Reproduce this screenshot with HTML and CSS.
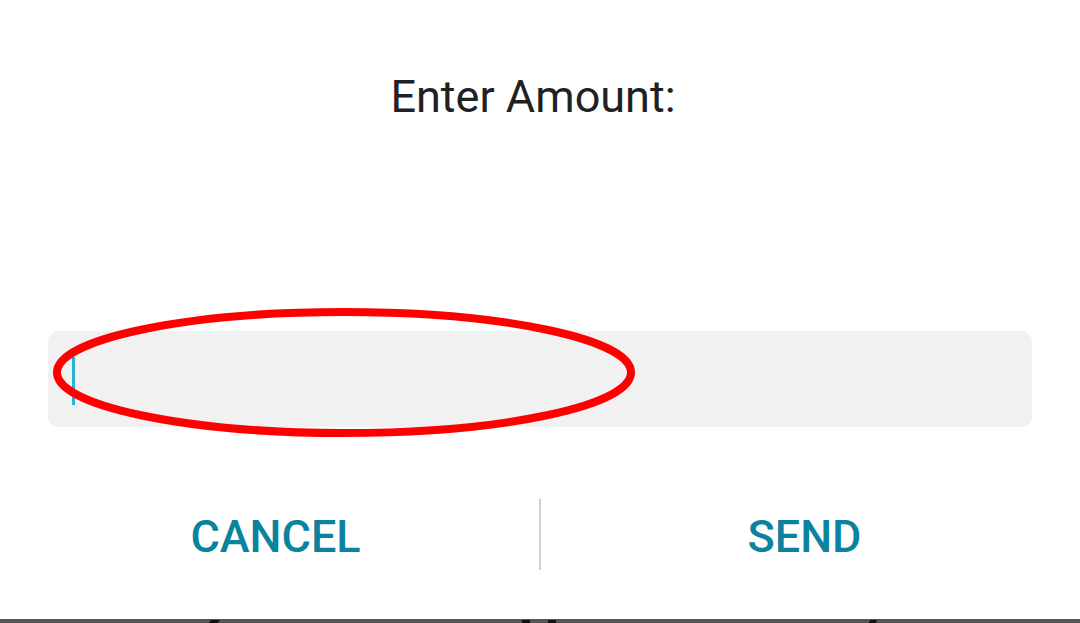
FILE: index.html
```html
<!DOCTYPE html>
<html lang="en">
<head>
<meta charset="utf-8">
<title>Enter Amount</title>
<link rel="stylesheet" href="styles.css">
</head>
<body>
<div class="screen">
  <div class="dialog">
    <div class="title">Enter Amount:</div>
    <div class="field">
      <span class="cursor"></span>
      <svg class="mark" width="984" height="96" viewBox="0 0 984 96">
        <ellipse cx="296" cy="41.5" rx="287" ry="60.5" fill="none" stroke="#ff0000" stroke-width="8"/>
      </svg>
    </div>
    <div class="actions">
      <button class="btn">CANCEL</button>
      <span class="divider"></span>
      <button class="btn">SEND</button>
    </div>
  </div>
  <div class="below">
    <svg width="1080" height="4" viewBox="0 0 1080 4">
      <polygon points="211,0 220,0 217,4 208,4" fill="#111"/>
      <rect x="522" y="0" width="8" height="4" fill="#111"/>
      <rect x="548" y="0" width="8" height="4" fill="#111"/>
      <polygon points="870,0 877,0 875,4 868,4" fill="#111"/>
    </svg>
  </div>
</div>
</body>
</html>
```

FILE: styles.css
```css
html, body {
  margin: 0;
  padding: 0;
  background: #ffffff;
}

.screen {
  width: 1080px;
  height: 623px;
  display: flex;
  flex-direction: column;
  overflow: hidden;
  font-family: Roboto, "Liberation Sans", sans-serif;
}

.dialog {
  flex: 1;
  display: flex;
  flex-direction: column;
  padding-top: 70px;
}

.title {
  font-size: 45px;
  line-height: 54px;
  color: #212121;
  text-align: center;
  padding-right: 14px;
}

.field {
  position: relative;
  margin: 207px 48px 0;
  height: 96px;
  background: #f1f1f1;
  border-radius: 10px;
}

.cursor {
  position: absolute;
  left: 24px;
  top: 26px;
  width: 3px;
  height: 48px;
  background: #2ab3d3;
}

.mark {
  position: absolute;
  left: 0;
  top: 0;
  overflow: visible;
}

.actions {
  margin-top: 72px;
  height: 71px;
  display: flex;
  align-items: stretch;
  padding: 0 12px;
}

.btn {
  flex: 1;
  border: none;
  background: transparent;
  padding: 4px 0 0;
  font-family: Roboto, "Liberation Sans", sans-serif;
  font-weight: 500;
  font-size: 45px;
  color: #0b839e;
}

.divider {
  width: 2px;
  background: #cfcfcf;
}

.below {
  height: 4px;
  background: #555555;
  line-height: 0;
}
```
